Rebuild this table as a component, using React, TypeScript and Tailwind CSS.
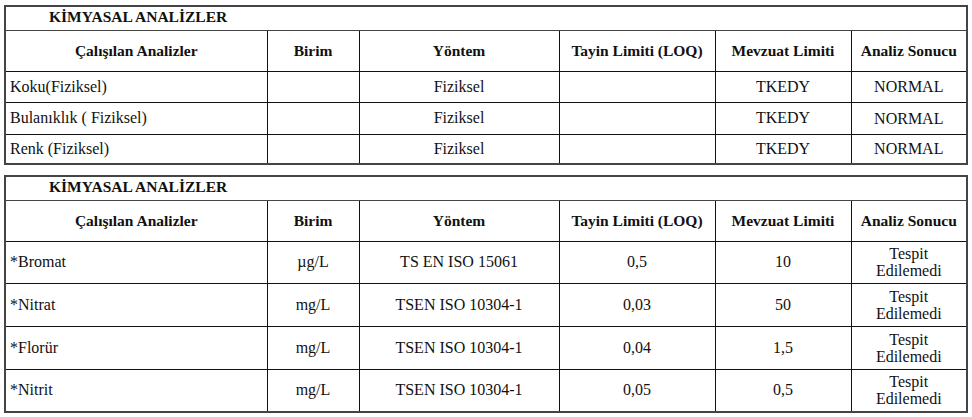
type Satir = {
  analiz: string;
  birim: string;
  yontem: string;
  loq: string;
  mevzuat: string;
  sonuc: string[];
  h: string;
};

const FIZIKSEL: Satir[] = [
  { analiz: "Koku(Fiziksel)", birim: "", yontem: "Fiziksel", loq: "", mevzuat: "TKEDY", sonuc: ["NORMAL"], h: "h-[31px]" },
  { analiz: "Bulanıklık ( Fiziksel)", birim: "", yontem: "Fiziksel", loq: "", mevzuat: "TKEDY", sonuc: ["NORMAL"], h: "h-[32px]" },
  { analiz: "Renk (Fiziksel)", birim: "", yontem: "Fiziksel", loq: "", mevzuat: "TKEDY", sonuc: ["NORMAL"], h: "h-[30px]" },
];

const KIMYASAL: Satir[] = [
  { analiz: "*Bromat", birim: "µg/L", yontem: "TS EN ISO 15061", loq: "0,5", mevzuat: "10", sonuc: ["Tespit", "Edilemedi"], h: "h-[42px]" },
  { analiz: "*Nitrat", birim: "mg/L", yontem: "TSEN ISO 10304-1", loq: "0,03", mevzuat: "50", sonuc: ["Tespit", "Edilemedi"], h: "h-[43px]" },
  { analiz: "*Florür", birim: "mg/L", yontem: "TSEN ISO 10304-1", loq: "0,04", mevzuat: "1,5", sonuc: ["Tespit", "Edilemedi"], h: "h-[43px]" },
  { analiz: "*Nitrit", birim: "mg/L", yontem: "TSEN ISO 10304-1", loq: "0,05", mevzuat: "0,5", sonuc: ["Tespit", "Edilemedi"], h: "h-[43px]" },
];

const BASLIKLAR = ["Çalışılan Analizler", "Birim", "Yöntem", "Tayin Limiti (LOQ)", "Mevzuat Limiti", "Analiz Sonucu"];

function Tablo({ satirlar }: { satirlar: Satir[] }) {
  const td = "border border-[#111] p-0 align-middle";
  return (
    <table className="table-fixed border-collapse w-[963px] border-2 border-[#444]">
      <colgroup>
        <col className="w-[262px]" />
        <col className="w-[92px]" />
        <col className="w-[200px]" />
        <col className="w-[156px]" />
        <col className="w-[136px]" />
        <col className="w-[116px]" />
      </colgroup>
      <tbody>
        <tr className="h-[24px]">
          <td colSpan={6} className="border border-[#444] align-top pl-[43px] pt-0 font-bold text-[15.5px] leading-[19px]">
            KİMYASAL ANALİZLER
          </td>
        </tr>
        <tr className="h-[41px]">
          {BASLIKLAR.map((b) => (
            <td key={b} className={`${td} text-center font-bold text-[15.5px]`}>{b}</td>
          ))}
        </tr>
        {satirlar.map((s) => (
          <tr key={s.analiz} className={s.h}>
            <td className={`${td} pl-[4px] text-[16px]`}>{s.analiz}</td>
            <td className={`${td} text-center text-[16px]`}>{s.birim}</td>
            <td className={`${td} text-center text-[16px]`}>{s.yontem}</td>
            <td className={`${td} text-center text-[16px]`}>{s.loq}</td>
            <td className={`${td} text-center text-[16px]`}>{s.mevzuat}</td>
            <td className={`${td} text-center text-[16px] leading-[17px]`}>
              {s.sonuc.map((l) => (
                <div key={l}>{l}</div>
              ))}
            </td>
          </tr>
        ))}
      </tbody>
    </table>
  );
}

export default function App() {
  return (
    <div className="font-[family-name:Liberation_Serif,serif] bg-white text-[#111] w-[972px] h-[417px] pl-[4px] pt-[5px] flex flex-col gap-[10px]">
      <Tablo satirlar={FIZIKSEL} />
      <Tablo satirlar={KIMYASAL} />
    </div>
  );
}
